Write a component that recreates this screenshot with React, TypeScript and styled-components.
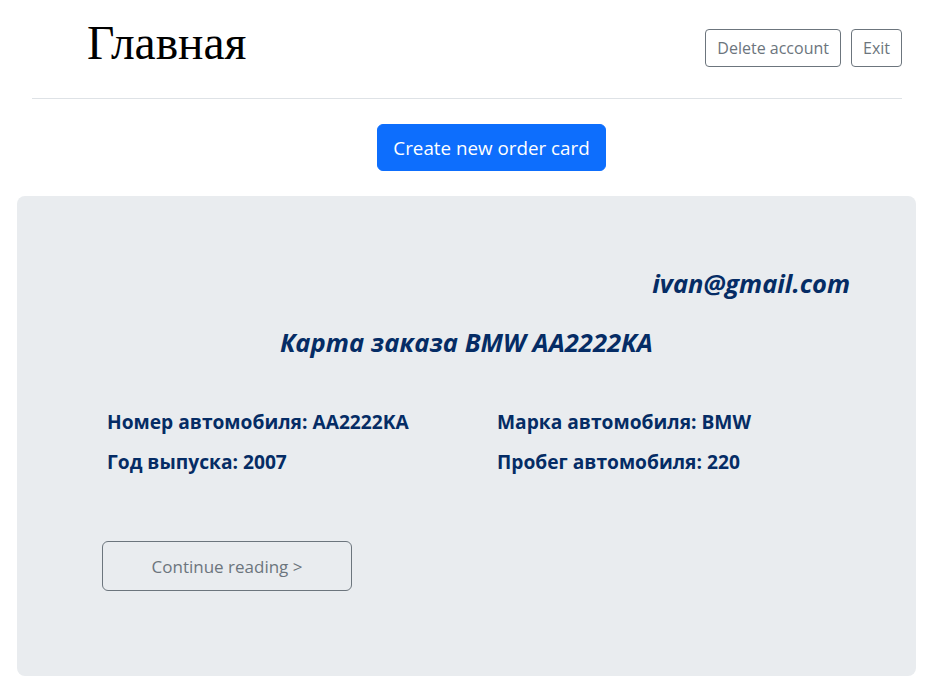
import React from "react";
import styled, { createGlobalStyle } from "styled-components";

const Global = createGlobalStyle`
  html, body { margin: 0; padding: 0; background: #fff; }
  body { font-family: "Open Sans", "Noto Sans", sans-serif; }
  * { box-sizing: border-box; }
`;

const Page = styled.div`
  padding: 0 17px 18px;
`;

const Header = styled.header`
  margin: 0 14px 0 15px;
  border-bottom: 1px solid #dee2e6;
  display: flex;
  align-items: flex-start;
  justify-content: space-between;
  height: 99px;
`;

const Title = styled.h1`
  margin: 20px 0 0 55px;
  font-family: "Liberation Serif", "Times New Roman", serif;
  font-weight: 400;
  font-size: 47.5px;
  line-height: 1;
  color: #000;
`;

const Actions = styled.div`
  display: flex;
  gap: 10px;
  margin-top: 29px;
`;

const OutlineButton = styled.button<{ $size?: "md" | "lg" }>`
  font-family: "Open Sans", sans-serif;
  background: transparent;
  color: #6c757d;
  border: 1px solid #6c757d;
  border-radius: ${(p) => (p.$size === "lg" ? "6px" : "4px")};
  font-size: ${(p) => (p.$size === "lg" ? "17px" : "16px")};
  height: ${(p) => (p.$size === "lg" ? "50px" : "38px")};
  padding: ${(p) => (p.$size === "lg" ? "0 16px" : "0 11px")};
  cursor: pointer;
`;

const CreateRow = styled.div`
  display: flex;
  justify-content: center;
  padding: 25px 0 25px 50px;
`;

const PrimaryButton = styled.button`
  font-family: "Open Sans", sans-serif;
  background: #0d6efd;
  color: #fff;
  border: 1px solid #0d6efd;
  border-radius: 6px;
  font-size: 18.8px;
  height: 47px;
  padding: 0 15px;
  cursor: pointer;
`;

const Card = styled.section`
  background: #e9ecef;
  border-radius: 8px;
  height: 480px;
  padding: 67px 66px 0 66px;
  color: #052c65;
`;

const Email = styled.div`
  text-align: right;
  font-weight: 700;
  font-style: italic;
  font-size: 25.5px;
  line-height: 40px;
`;

const CardTitle = styled.h2`
  margin: 20px 0 0;
  text-align: center;
  font-weight: 700;
  font-style: italic;
  font-size: 25.6px;
  line-height: 40px;
`;

const Fields = styled.div`
  margin: 47px 0 0 24px;
  display: grid;
  grid-template-columns: 390px 1fr;
  row-gap: 16px;
`;

const Field = styled.div`
  font-weight: 700;
  font-size: 19.2px;
  line-height: 24px;
`;

const Footer = styled.div`
  margin: 67px 0 0 19px;
`;

const ReadButton = styled(OutlineButton)`
  width: 250px;
`;

export default function App() {
  return (
    <>
      <Global />
      <Page>
        <Header>
          <Title>Главная</Title>
          <Actions>
            <OutlineButton>Delete account</OutlineButton>
            <OutlineButton>Exit</OutlineButton>
          </Actions>
        </Header>
        <CreateRow>
          <PrimaryButton>Create new order card</PrimaryButton>
        </CreateRow>
        <Card>
          <Email>ivan@gmail.com</Email>
          <CardTitle>Карта заказа BMW AA2222KA</CardTitle>
          <Fields>
            <Field>Номер автомобиля: AA2222KA</Field>
            <Field>Марка автомобиля: BMW</Field>
            <Field>Год выпуска: 2007</Field>
            <Field>Пробег автомобиля: 220</Field>
          </Fields>
          <Footer>
            <ReadButton $size="lg">Continue reading &gt;</ReadButton>
          </Footer>
        </Card>
      </Page>
    </>
  );
}
